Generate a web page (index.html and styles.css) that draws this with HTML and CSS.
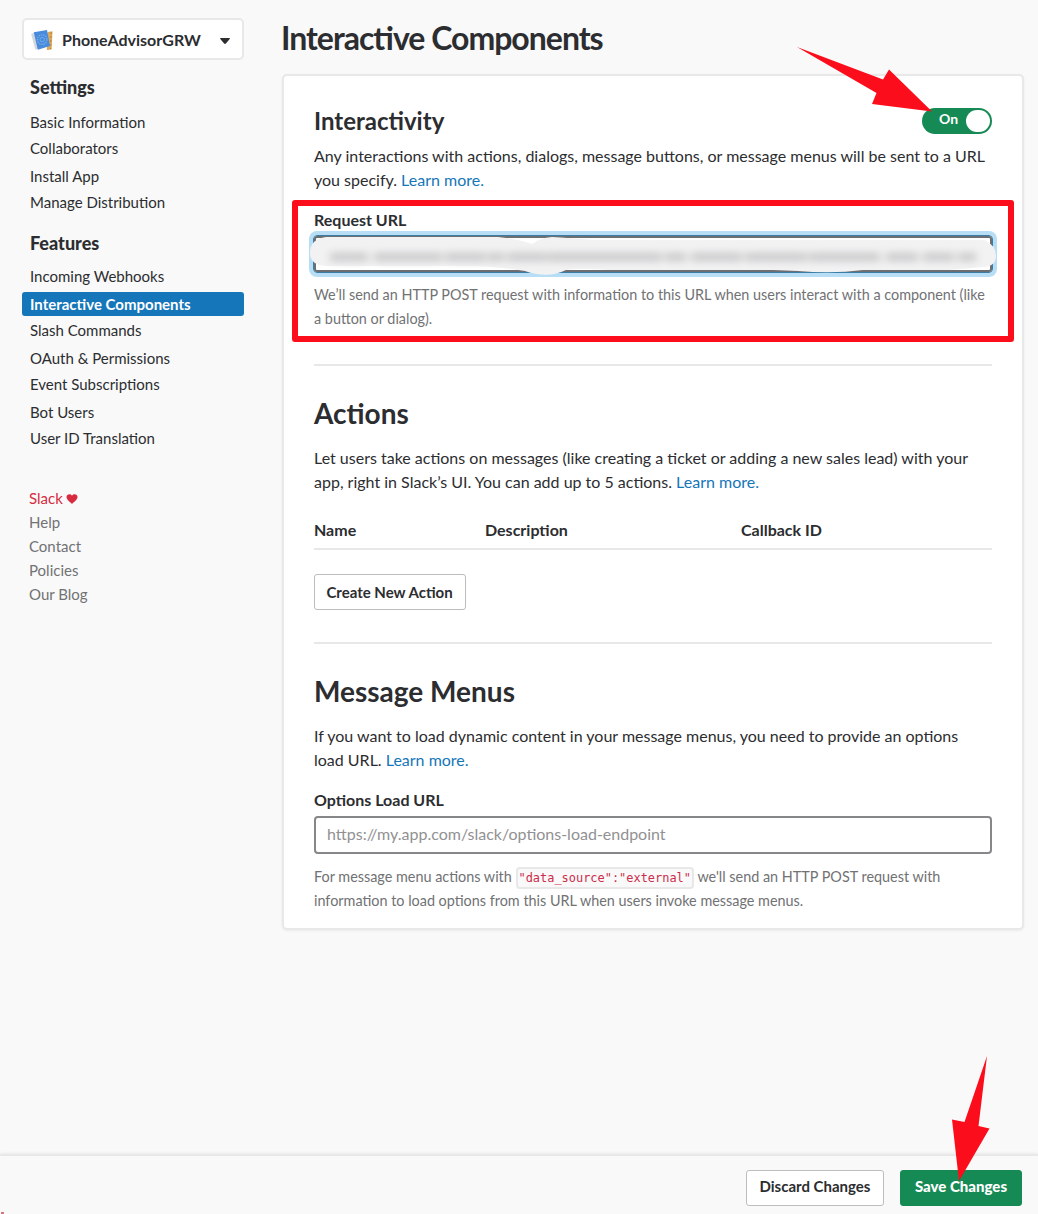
FILE: index.html
```html
<!DOCTYPE html>
<html lang="en">
<head>
<meta charset="utf-8">
<title>Interactive Components</title>
<link rel="stylesheet" href="styles.css">
</head>
<body>
<div class="page">
  <div class="columns">
    <aside class="sidebar">
      <button class="app-picker">
        <svg class="app-icon" width="24" height="24" viewBox="0 0 24 24">
          <path d="M1.200 5l3-1.200 5 16-4 .8z" fill="#d3d8dd"/>
          <path d="M17.500 3l5-.8-.9 18.200-4.800.6z" fill="#dba95c"/>
          <path d="M21.200 3l-.6 17" stroke="#b88238" stroke-width="1" stroke-dasharray="2 2"/>
          <path d="M3.800 3.300L17 1l3 16L7.800 20.800z" fill="#488bdc"/>
          <circle cx="12.200" cy="10.600" r="4.800" fill="none" stroke="#74abe9" stroke-width="1.300" stroke-dasharray="1.500 .8"/>
          <circle cx="12.200" cy="10.600" r="2.200" fill="none" stroke="#74abe9"/>
        </svg>
        <span class="app-name">PhoneAdvisorGRW</span>
        <svg class="caret" width="12" height="8" viewBox="0 0 12 8"><path d="M1.800 1h8.400q1.200 0 .5 1L6.900 6.500q-.9.900-1.800 0L1.300 2Q.6 1 1.800 1z" fill="#2c2d30"/></svg>
      </button>
      <h4 class="nav-title">Settings</h4>
      <nav class="nav">
        <a class="nav-item">Basic Information</a>
        <a class="nav-item short">Collaborators</a>
        <a class="nav-item">Install App</a>
        <a class="nav-item short">Manage Distribution</a>
      </nav>
      <h4 class="nav-title features-title">Features</h4>
      <nav class="nav">
        <a class="nav-item">Incoming Webhooks</a>
        <a class="nav-item active">Interactive Components</a>
        <a class="nav-item short">Slash Commands</a>
        <a class="nav-item">OAuth &amp; Permissions</a>
        <a class="nav-item short">Event Subscriptions</a>
        <a class="nav-item">Bot Users</a>
        <a class="nav-item short">User ID Translation</a>
      </nav>
      <div class="links">
        <a class="love">Slack <svg class="heart" width="12" height="10" viewBox="0 0 12 10"><path d="M6 10C4.500 8.500.5 6 .5 3.100.5.200 4.300-.7 6 1.800 7.700-.7 11.500.2 11.500 3.100 11.500 6 7.500 8.500 6 10z" fill="#d72b3f"/></svg></a>
        <a>Help</a>
        <a>Contact</a>
        <a>Policies</a>
        <a>Our Blog</a>
      </div>
    </aside>
    <main class="main">
      <h1 class="title">Interactive Components</h1>
      <div class="card">
        <div class="interactivity-head">
          <h3 class="subheading">Interactivity</h3>
          <div class="toggle"><span class="toggle-label">On</span><span class="knob"></span></div>
        </div>
        <p class="text">Any interactions with actions, dialogs, message buttons, or message menus will be sent to a URL<br>you specify. <a class="link">Learn more.</a></p>
        <div class="request">
          <label class="label">Request URL</label>
          <div class="input focused">
            <svg class="redaction" width="700" height="44" viewBox="0 0 700 44">
              <defs><filter id="soft" filterUnits="userSpaceOnUse" x="0" y="0" width="700" height="44"><feGaussianBlur stdDeviation="4 3.500"/></filter></defs>
              <path d="M18 4H190Q210 6 224 11Q232 5 244 4Q260 5 285 7H676Q688 12 688 23Q688 33 676 34L640 37H555Q525 41 490 38L465 37H300Q270 35 258 37Q240 46 217 38Q190 33 160 33H20Q2 33 2 20Q2 6 18 4z" fill="#f2f2f3"/>
              <path d="M22 24H60M66 24H134M137 24H178M180 24H196M199 24H238M239 24H354M357 24H378M383 24H434M437 24H499M501 24H572M578 24H610M615 24H646M650 24H668" stroke="#d0d0d1" stroke-width="10" filter="url(#soft)"/>
            </svg>
          </div>
          <p class="hint">We’ll send an HTTP POST request with information to this URL when users interact with a component (like<br>a button or dialog).</p>
          <div class="highlight"></div>
        </div>
        <hr class="rule">
        <h2 class="heading">Actions</h2>
        <p class="text">Let users take actions on messages (like creating a ticket or adding a new sales lead) with your<br>app, right in Slack’s UI. You can add up to 5 actions. <a class="link">Learn more.</a></p>
        <div class="table-head"><span>Name</span><span>Description</span><span>Callback ID</span></div>
        <button class="btn create">Create New Action</button>
        <hr class="rule rule-menus">
        <h2 class="heading">Message Menus</h2>
        <p class="text">If you want to load dynamic content in your message menus, you need to provide an options<br>load URL. <a class="link">Learn more.</a></p>
        <label class="label options-label">Options Load URL</label>
        <div class="input">https://my.app.com/slack/options-load-endpoint</div>
        <p class="hint options-hint">For message menu actions with <code class="code">"data_source":"external"</code> we'll send an HTTP POST request with<br>information to load options from this URL when users invoke message menus.</p>
      </div>
    </main>
  </div>
  <footer class="footer">
    <button class="btn discard">Discard Changes</button>
    <button class="btn save">Save Changes</button>
  </footer>
  <svg class="arrows" width="1038" height="1214" viewBox="0 0 1038 1214" fill="#fc0d1b">
    <path d="M797 47L883 79.500L889 69.500L932 111.500L872 104L876.500 93Z"/>
    <path d="M987 1056L978.500 1126L989.500 1128.500L959 1181L952 1119.500L964.500 1122Z"/>
    <path d="M1 1212h3v2h-3z" fill="#d8747c"/>
  </svg>
</div>
</body>
</html>
```
FILE: styles.css
```css
* { box-sizing: border-box; }
body {
  margin: 0;
  background: #f9f9f9;
  color: #2c2d30;
  font: 16px/24px Lato, "Liberation Sans", sans-serif;
  font-feature-settings: "liga" 1;
}
h1, h2, h3, h4, p { margin: 0; }
button { font: inherit; color: inherit; }
.page {
  position: relative;
  display: flex;
  flex-direction: column;
  height: 1214px;
  overflow: hidden;
}
.columns { display: flex; flex: 1; gap: 38px; padding: 18px 14px 0 22px; }

.sidebar { width: 222px; font-size: 15px; }
.app-picker {
  display: flex;
  align-items: center;
  width: 222px;
  height: 42px;
  padding: 0 11px 0 6px;
  background: #fff;
  border: 2px solid #e8e8e8;
  border-radius: 5px;
  font-size: 16px;
  font-weight: 700;
}
.app-icon { margin-top: 4px; }
.app-name { margin: 2px auto 0 8px; }
.caret { margin-top: 3px; }
.nav-title {
  margin: 15px 0 11px;
  padding-left: 8px;
  font-size: 18px;
  line-height: 24px;
  font-weight: 900;
}
.features-title { margin: 13px 0 9px; }
.nav { display: flex; flex-direction: column; }
.nav-item { height: 24px; margin-bottom: 2px; padding: 0 8px; line-height: 24px; }
.nav-item.short { margin-bottom: 4px; }
.nav-item:first-child + .active { margin-top: 2px; }
.active {
  background: #1576b9;
  border-radius: 3px;
  color: #fff;
  font-weight: 700;
}
.links {
  display: flex;
  flex-direction: column;
  margin: 32px 0 0 7px;
  color: #717274;
}
.love { color: #d72b3f; }
.heart { margin-left: -1px; }

.main { width: 742px; }
.title {
  margin: 0 0 16px -1px;
  font-size: 32px;
  line-height: 40px;
  letter-spacing: -1px;
}
.card {
  height: 856px;
  padding: 30px;
  background: #fff;
  border: 2px solid #e8e8e8;
  border-radius: 5px;
  box-shadow: 0 1px 3px rgba(0, 0, 0, .06);
}
.interactivity-head {
  display: flex;
  justify-content: space-between;
  align-items: flex-start;
  height: 38px;
}
.subheading { font-size: 24px; line-height: 30px; }
.toggle {
  display: flex;
  align-items: center;
  justify-content: space-between;
  width: 70px;
  height: 26px;
  margin-top: 2px;
  padding: 0 2px 0 17px;
  background: #168a54;
  border-radius: 13px;
  color: #fff;
  font-size: 14px;
  font-weight: 700;
}
.toggle-label { margin-top: -4px; }
.knob { width: 24px; height: 22px; background: #fff; border-radius: 11px; }
.link { color: #1576b9; }
.request { position: relative; margin-top: 16px; }
.highlight {
  position: absolute;
  left: -22px;
  top: -8px;
  width: 722px;
  height: 142px;
  border: 6px solid #fc0d1b;
  border-radius: 3px;
}
.label { display: block; height: 27px; font-weight: 700; }
.input {
  position: relative;
  height: 38px;
  padding: 4px 11px;
  border: 2px solid #868789;
  border-radius: 4px;
  color: #919193;
}
.focused {
  margin: 0 -1px;
  border: 1px solid #3a7ea8;
  box-shadow: 0 0 0 4px #b7def5, inset 0 0 0 2px #6d6e72;
}
.redaction { position: absolute; left: -6px; top: -3px; overflow: visible; }
.hint { margin-top: 10px; color: #717274; font-size: 14.400px; line-height: 24px; }
.options-hint { margin-top: 11px; }
.rule { height: 2px; margin: 33px 0 0; border: 0; background: #e8e8e8; }
.heading { margin: 28px 0 14px; font-size: 28px; line-height: 38px; }
.table-head {
  display: grid;
  grid-template-columns: 171px 256px 1fr;
  height: 32px;
  margin-top: 24px;
  border-bottom: 2px solid #e8e8e8;
  font-weight: 700;
}
.btn {
  height: 36px;
  padding: 0;
  background: #fff;
  border: 1px solid #bdbdbf;
  border-radius: 3px;
  font-size: 15px;
  font-weight: 700;
}
.create { display: block; width: 152px; margin-top: 24px; padding-right: 1px; }
.rule-menus { margin-top: 32px; }
.options-label { height: 28px; margin-top: 16px; }
.code {
  padding: 2px 1px;
  background: #f9f9f9;
  border: 2px solid #e8e8e8;
  border-radius: 4px;
  color: #cc2c4a;
  font: 11.950px "DejaVu Sans Mono", monospace;
}

.footer {
  display: flex;
  justify-content: flex-end;
  gap: 16px;
  height: 60px;
  padding: 14px 16px 0 0;
  border-top: 2px solid #e8e8e8;
  box-shadow: 0 -1px 3px rgba(0, 0, 0, .06);
}
.footer .btn { padding-bottom: 4px; }
.discard { width: 138px; }
.save { width: 122px; background: #168a54; border-color: #168a54; color: #fff; font-weight: 900; }
.arrows { position: absolute; left: 0; top: 0; }
```
